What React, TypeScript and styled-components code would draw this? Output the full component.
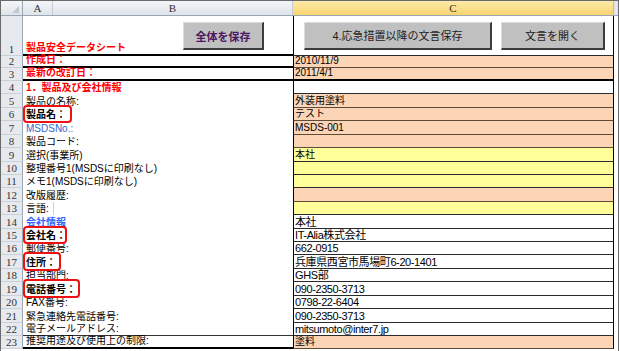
import React from "react";
import styled, { createGlobalStyle } from "styled-components";

type Fill = "white" | "orange" | "yellow";
type Tone = "plain" | "red" | "blue" | "blueBold" | "bold";
type Rule = "none" | "thin" | "thick";

interface RowData {
  n: number;
  label: string;
  tone?: Tone;
  mark?: number;
  value?: string;
  fill: Fill;
  big?: boolean;
  labelRule?: Rule;
  valueRule?: Rule;
  divider?: boolean;
}

const cellFont = `"Liberation Sans", "Noto Sans CJK JP", sans-serif`;

const GlobalStyle = createGlobalStyle`
  html, body {
    margin: 0;
    padding: 0;
    background: #fff;
    overflow: hidden;
  }
  body {
    font-family: ${cellFont};
  }
`;

const fills: Record<Fill, string> = {
  white: "#ffffff",
  orange: "#fbd5b5",
  yellow: "#ffff99",
};

const tones: Record<Tone, string> = {
  plain: "color: #000; font-weight: 400;",
  red: "color: #ff0000; font-weight: 700;",
  blue: "color: #3366cc; font-weight: 400;",
  blueBold: "color: #3366ff; font-weight: 700;",
  bold: "color: #000; font-weight: 700;",
};

const Frame = styled.div`
  width: 619px;
  height: 351px;
  box-sizing: border-box;
  border: 1px solid #6a6a6a;
  border-bottom: none;
  overflow: hidden;
  background: #fff;
  display: flex;
  flex-direction: column;
`;

const HeaderRow = styled.div`
  display: flex;
  height: 15px;
  flex-shrink: 0;
  box-sizing: border-box;
  border-bottom: 1px solid #9aa6b4;
`;

const Corner = styled.div`
  width: 22px;
  box-sizing: border-box;
  border-right: 1px solid #9aa6b4;
  background: linear-gradient(#f4f6f9, #dfe4ea);
  position: relative;
  &::after {
    content: "";
    position: absolute;
    right: 3px;
    bottom: 2px;
    border-left: 7px solid transparent;
    border-bottom: 7px solid #c3c9d1;
  }
`;

const ColHead = styled.div<{ $w: number; $active?: boolean }>`
  width: ${({ $w }) => $w}px;
  box-sizing: border-box;
  border-right: 1px solid ${({ $active }) => ($active ? "#e9b94c" : "#c4cbd4")};
  background: ${({ $active }) =>
    $active ? "linear-gradient(#fdeaa9, #f9d46e)" : "linear-gradient(#f4f6f9, #dfe4ea)"};
  display: flex;
  align-items: center;
  justify-content: center;
  font-family: "Liberation Serif", serif;
  font-size: 11px;
  line-height: 13px;
  color: #2e2e2e;
`;

const Gutter = styled.div<{ $head?: boolean }>`
  width: 4px;
  background: ${({ $head }) => ($head ? "#e3e7ec" : "#ffffff")};
`;

const Row = styled.div<{ $h: number }>`
  display: flex;
  height: ${({ $h }) => $h}px;
  flex-shrink: 0;
`;

const RowHead = styled.div`
  width: 22px;
  box-sizing: border-box;
  background: #e6eaef;
  border-right: 1px solid #9aa6b4;
  border-bottom: 1px solid #c9d0d8;
  display: flex;
  align-items: flex-end;
  justify-content: center;
  font-family: "Liberation Serif", serif;
  font-size: 11px;
  line-height: 12px;
  color: #333;
`;

const ruleCss = (rule: Rule | undefined, color: string) => {
  if (rule === "thick") return "border-bottom: 2px solid #000;";
  if (rule === "thin") return `border-bottom: 1px solid ${color};`;
  return "";
};

const LabelCell = styled.div<{ $rule?: Rule; $divider?: boolean }>`
  width: 270px;
  box-sizing: border-box;
  position: relative;
  display: flex;
  align-items: flex-end;
  padding-left: 3px;
  ${({ $rule }) => ruleCss($rule, "#333")}
  ${({ $divider }) =>
    $divider &&
    `&::after {
      content: "";
      position: absolute;
      left: 30px;
      top: 0;
      bottom: 0;
      border-left: 1px solid #d0d0d0;
    }`}
`;

const TitleCell = styled(LabelCell)`
  align-items: stretch;
  justify-content: space-between;
`;

const Label = styled.span<{ $tone: Tone }>`
  font-size: 10px;
  line-height: 12px;
  white-space: nowrap;
  ${({ $tone }) => tones[$tone]}
`;

const Title = styled(Label)`
  align-self: flex-end;
`;

const Mark = styled.span<{ $w: number }>`
  position: absolute;
  left: 0;
  top: -3px;
  bottom: -2px;
  width: ${({ $w }) => $w}px;
  box-sizing: border-box;
  border: 2.5px solid #ee1111;
  border-radius: 4px;
  z-index: 2;
`;

const ValueCell = styled.div<{ $fill: Fill; $rule?: Rule; $big?: boolean }>`
  width: 321px;
  box-sizing: border-box;
  background: ${({ $fill }) => fills[$fill]};
  border-left: 1px solid #000;
  border-right: 1px solid #000;
  ${({ $rule, $fill }) => ruleCss($rule, $fill === "orange" ? "#5e4a38" : "#2a2a2a")}
  display: flex;
  align-items: flex-end;
  padding-left: 1px;
  font-size: ${({ $big }) => ($big ? "11px" : "10px")};
  letter-spacing: ${({ $big }) => ($big ? "-0.4px" : "0")};
  line-height: 12px;
  color: #000;
  white-space: nowrap;
`;

const ButtonCell = styled(ValueCell)`
  align-items: flex-start;
  gap: 9px;
  padding: 6px 0 0 10px;
`;

const SheetButton = styled.div<{ $w: number; $accent?: boolean }>`
  width: ${({ $w }) => $w}px;
  height: 28px;
  box-sizing: border-box;
  background: #c0c0c0;
  border-top: 1px solid #dcdcdc;
  border-left: 1px solid #dcdcdc;
  border-right: 2px solid #3c3c3c;
  border-bottom: 2px solid #3c3c3c;
  display: flex;
  align-items: center;
  justify-content: center;
  font-size: 11px;
  letter-spacing: 0;
  white-space: nowrap;
  color: ${({ $accent }) => ($accent ? "#4b1760" : "#1e1e1e")};
  font-weight: ${({ $accent }) => ($accent ? 700 : 400)};
`;

const BButton = styled(SheetButton)`
  margin: 6px 29px 0 0;
`;

const rowHeight = (r: number) => {
  if (r === 2) return 12;
  if (r === 3) return 13;
  return Math.round((r - 3) * 13.42) - Math.round((r - 4) * 13.42);
};

const rows: RowData[] = [
  { n: 2, label: "作成日：", tone: "red", value: "2010/11/9", fill: "orange", labelRule: "thick", valueRule: "thin" },
  { n: 3, label: "最新の改訂日：", tone: "red", value: "2011/4/1", fill: "orange", labelRule: "thick", valueRule: "thick" },
  { n: 4, label: "1．製品及び会社情報", tone: "red", fill: "white", valueRule: "thin" },
  { n: 5, label: "製品の名称:", value: "外装用塗料", fill: "orange", valueRule: "thin" },
  { n: 6, label: "製品名：", tone: "bold", mark: 49, value: "テスト", fill: "orange", valueRule: "thin" },
  { n: 7, label: "MSDSNo.:", tone: "blue", value: "MSDS-001", fill: "orange", valueRule: "thin" },
  { n: 8, label: "製品コード:", fill: "orange", valueRule: "thin" },
  { n: 9, label: "選択(事業所)", value: "本社", fill: "yellow", valueRule: "thin" },
  { n: 10, label: "整理番号1(MSDSに印刷なし)", fill: "yellow", valueRule: "thin" },
  { n: 11, label: "メモ1(MSDSに印刷なし)", fill: "yellow", valueRule: "thin" },
  { n: 12, label: "改版履歴:", fill: "orange", valueRule: "thin" },
  { n: 13, label: "言語:", fill: "yellow", valueRule: "thin", divider: true },
  { n: 14, label: "会社情報", tone: "blueBold", value: "本社", fill: "white", big: true, valueRule: "thin" },
  { n: 15, label: "会社名：", tone: "bold", mark: 44, value: "IT-Alia株式会社", fill: "white", big: true, valueRule: "thin" },
  { n: 16, label: "郵便番号:", value: "662-0915", fill: "white", big: true, valueRule: "thin" },
  { n: 17, label: "住所：", tone: "bold", mark: 38, value: "兵庫県西宮市馬場町6-20-1401", fill: "white", big: true, valueRule: "thin" },
  { n: 18, label: "担当部門:", value: "GHS部", fill: "white", big: true, valueRule: "thin" },
  { n: 19, label: "電話番号：", tone: "bold", mark: 57, value: "090-2350-3713", fill: "white", big: true, valueRule: "thin" },
  { n: 20, label: "FAX番号:", value: "0798-22-6404", fill: "white", big: true, valueRule: "thin" },
  { n: 21, label: "緊急連絡先電話番号:", value: "090-2350-3713", fill: "white", big: true, valueRule: "thin" },
  { n: 22, label: "電子メールアドレス:", value: "mitsumoto@inter7.jp", fill: "white", big: true, valueRule: "thin", labelRule: "thin" },
  { n: 23, label: "推奨用途及び使用上の制限:", value: "塗料", fill: "orange", valueRule: "thin", labelRule: "thick" },
];

function App() {
  return (
    <>
      <GlobalStyle />
      <Frame>
        <HeaderRow>
          <Corner />
          <ColHead $w={30}>A</ColHead>
          <ColHead $w={240}>B</ColHead>
          <ColHead $w={321} $active>C</ColHead>
          <Gutter $head />
        </HeaderRow>

        <Row $h={40}>
          <RowHead>1</RowHead>
          <TitleCell $rule="thick">
            <Title $tone="red">製品安全データシート</Title>
            <BButton $w={81} $accent>全体を保存</BButton>
          </TitleCell>
          <ButtonCell $fill="white" $rule="thin">
            <SheetButton $w={188}>4.応急措置以降の文言保存</SheetButton>
            <SheetButton $w={104}>文言を開く</SheetButton>
          </ButtonCell>
          <Gutter />
        </Row>

        {rows.map((row) => (
          <Row key={row.n} $h={rowHeight(row.n)}>
            <RowHead>{row.n}</RowHead>
            <LabelCell $rule={row.labelRule} $divider={row.divider}>
              <Label $tone={row.tone ?? "plain"}>{row.label}</Label>
              {row.mark && <Mark $w={row.mark} />}
            </LabelCell>
            <ValueCell $fill={row.fill} $rule={row.valueRule} $big={row.big}>
              {row.value}
            </ValueCell>
            <Gutter />
          </Row>
        ))}
      </Frame>
    </>
  );
}

export default App;
